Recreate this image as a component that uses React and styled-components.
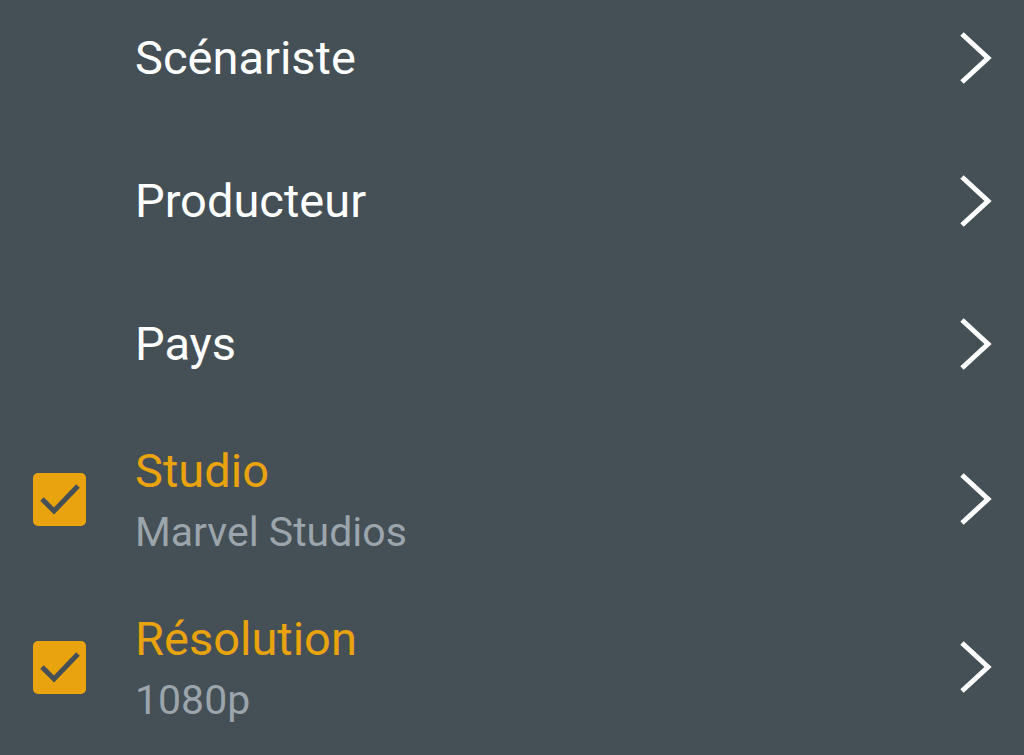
import React from "react";
import styled, { createGlobalStyle } from "styled-components";

const GlobalStyle = createGlobalStyle`
  html, body {
    margin: 0;
    padding: 0;
    background: #454f56;
    overflow: hidden;
  }
  body {
    font-family: Roboto, "Noto Sans", sans-serif;
  }
`;

const items = [
  { title: "Scénariste" },
  { title: "Producteur" },
  { title: "Pays" },
  { title: "Studio", value: "Marvel Studios", checked: true },
  { title: "Résolution", value: "1080p", checked: true },
];

function App() {
  return (
    <Screen>
      <GlobalStyle />
      <List>
        {items.map((item) => (
          <Row key={item.title} tall={!!item.value}>
            <CheckSlot>
              {item.checked && (
                <CheckBox>
                  <svg width="53" height="53" viewBox="0 0 53 53">
                    <polyline
                      points="9,26 21,38 45,13"
                      fill="none"
                      stroke="#454f56"
                      strokeWidth="5"
                    />
                  </svg>
                </CheckBox>
              )}
            </CheckSlot>
            <Texts tall={!!item.value}>
              <Title active={item.checked}>{item.title}</Title>
              {item.value && <Value>{item.value}</Value>}
            </Texts>
            <Chevron>
              <svg width="36" height="54" viewBox="0 0 36 54">
                <polyline
                  points="4,3 30,27 4,51"
                  fill="none"
                  stroke="#ffffff"
                  strokeWidth="5"
                />
              </svg>
            </Chevron>
          </Row>
        ))}
      </List>
    </Screen>
  );
}

const Screen = styled.div`
  width: 1024px;
  height: 755px;
  overflow: hidden;
  background: #454f56;
`;

const List = styled.div`
  display: flex;
  flex-direction: column;
  margin-top: -14px;
`;

const Row = styled.div`
  display: flex;
  align-items: center;
  height: ${(p) => (p.tall ? "168px" : "143px")};
  padding-right: 30px;
  box-sizing: border-box;
`;

const CheckSlot = styled.div`
  width: 135px;
  flex-shrink: 0;
  display: flex;
  align-items: center;
  padding-left: 33px;
  box-sizing: border-box;
`;

const CheckBox = styled.div`
  width: 53px;
  height: 53px;
  border-radius: 5px;
  background: #e9a30f;
  display: flex;
  align-items: center;
  justify-content: center;
`;

const Texts = styled.div`
  flex: 1;
  display: flex;
  flex-direction: column;
  padding-top: ${(p) => (p.tall ? "8px" : "0")};
`;

const Title = styled.div`
  font-size: 47px;
  line-height: 58px;
  color: ${(p) => (p.active ? "#e9a30f" : "#ffffff")};
`;

const Value = styled.div`
  font-size: 41px;
  line-height: 64px;
  color: #9ba5ab;
`;

const Chevron = styled.div`
  display: flex;
  align-items: center;
`;

export default App;
